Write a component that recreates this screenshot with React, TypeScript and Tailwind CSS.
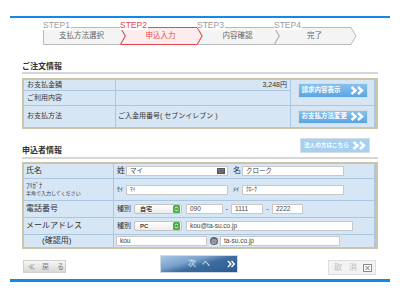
import type { ReactNode } from 'react'

const steps = [
  { label: 'STEP1', text: '支払方法選択' },
  { label: 'STEP2', text: '申込入力', active: true },
  { label: 'STEP3', text: '内容確認' },
  { label: 'STEP4', text: '完了' }
]

function Step({ label, text, active, first }: { label: string; text: string; active?: boolean; first?: boolean }) {
  const stroke = active ? '#e8474c' : '#b9b9b9'
  const fill = active ? '#fdeced' : '#f4f4f4'
  const points = first
    ? '0.5,0.5 77,0.5 82,9 77,17.5 0.5,17.5'
    : '0.5,0.5 77,0.5 82,9 77,17.5 0.5,17.5 5.5,9'
  return (
    <div className={`relative h-[18px] w-[77px] shrink-0 ${active ? 'z-10' : ''}`}>
      <svg className="absolute left-0 top-0 overflow-visible" width="83" height="18">
        <polygon points={points} fill={fill} stroke={stroke} strokeWidth="1" />
      </svg>
      <div
        className={`relative flex h-full items-center justify-center text-[7.5px] ${first ? 'w-[77px]' : 'w-[81px]'} ${active ? 'text-[#e8474c]' : 'text-[#666]'}`}
      >
        {text}
      </div>
      <span
        className={`absolute left-0 top-[-6px] bg-white pr-px text-[8.5px] leading-[8.5px] ${active ? 'text-[#e8474c]' : 'text-[#9a9a9a]'}`}
      >
        {label}
      </span>
    </div>
  )
}

function Chevrons() {
  return (
    <svg className="shrink-0" width="15" height="9" viewBox="0 0 15 9">
      <path d="M1.5 1 L5.5 4.5 L1.5 8 M8 1 L12 4.5 L8 8" fill="none" stroke="#fff" strokeWidth="2.4" />
    </svg>
  )
}

function BlueButton({ children, faded, tall }: { children: ReactNode; faded?: boolean; tall?: boolean }) {
  return (
    <div
      className={`flex w-[70px] items-center justify-between border border-[#d6dde4] pl-[3px] pr-[2px] font-bold text-white ${tall ? 'h-[15px]' : 'h-[14px]'} ${faded ? 'bg-[#a6d0f2] text-[5.6px]' : 'bg-gradient-to-b from-[#86c2ef] to-[#5ba4e1] text-[6.5px]'}`}
    >
      <span className="whitespace-nowrap leading-none">{children}</span>
      <Chevrons />
    </div>
  )
}

function Input({ w, children, small }: { w: string; children?: ReactNode; small?: boolean }) {
  return (
    <div
      className={`flex h-[10px] shrink-0 items-center border border-[#c8c8c8] bg-white pl-[3px] leading-none text-[#444] ${small ? 'text-[5.5px]' : 'text-[6.5px]'} ${w}`}
    >
      {children}
    </div>
  )
}

function Select({ value }: { value: string }) {
  return (
    <div className="flex h-[10px] w-[48px] shrink-0 items-center justify-between rounded-[2px] border border-[#c3c3c3] bg-gradient-to-b from-white to-[#ececec] pl-[5px] pr-px text-[6px] font-bold leading-none text-[#444]">
      <span>{value}</span>
      <svg width="7" height="8" viewBox="0 0 7 8">
        <rect width="7" height="8" rx="1.5" fill="#47ad45" />
        <path d="M2 3.3 L3.5 1.8 L5 3.3 M2 4.7 L3.5 6.2 L5 4.7" fill="none" stroke="#fff" strokeWidth="0.9" />
      </svg>
    </div>
  )
}

function Cell({ children, className = '' }: { children?: ReactNode; className?: string }) {
  return <div className={`flex items-center bg-[#d6e6f5] ${className}`}>{children}</div>
}

export default function App() {
  return (
    <div className="h-[300px] w-[400px] overflow-hidden bg-white pt-[16px] font-['Liberation_Sans','Noto_Sans_CJK_JP',sans-serif] text-[#333]">
      <div className="mx-[10px] h-[2px] bg-[#1289ea]" />

      <div className="mt-[9px] flex pl-[43px]">
        {steps.map((s, i) => (
          <Step key={s.label} label={s.label} text={s.text} active={s.active} first={i === 0} />
        ))}
      </div>

      {/* ご注文情報 */}
      <div className="mx-[22px] mt-[17px] border-b-2 border-[#d6d6d6] pb-px">
        <span className="block text-[8px] font-bold leading-[9px] text-[#333]">ご注文情報</span>
      </div>

      <div className="mx-[22px] mt-[4px] grid grid-cols-[91px_174px_83px] grid-rows-[10px_14px_21px] gap-px border-2 border-[#ccc4aa] bg-[#abc6e0] text-[7px]">
        <Cell className="pl-[3px]">お支払金額</Cell>
        <Cell className="justify-end pr-[3px]">3,248円</Cell>
        <div className="row-span-2 flex justify-center bg-[#d6e6f5] pt-[3px]">
          <BlueButton tall>請求内容表示</BlueButton>
        </div>
        <Cell className="pl-[3px]">ご利用内容</Cell>
        <Cell />
        <Cell className="pl-[3px]">お支払方法</Cell>
        <Cell className="pl-[2px]">ご入金用番号( セブンイレブン )</Cell>
        <Cell className="justify-center">
          <BlueButton>お支払方法変更</BlueButton>
        </Cell>
      </div>

      {/* 申込者情報 */}
      <div className="mx-[22px] mt-[9px] flex items-end justify-between border-b-2 border-[#d6d6d6]">
        <span className="block pb-[2px] text-[8px] font-bold leading-[9px] text-[#333]">申込者情報</span>
        <div className="mb-[4px] mr-[8px]">
          <BlueButton faded tall>法人の方はこちら</BlueButton>
        </div>
      </div>

      <div className="mx-[22px] mt-[3px] grid grid-cols-[89px_260px] grid-rows-[14px_21px_16px_16px_12px] gap-px border-2 border-[#ccc4aa] bg-[#abc6e0] text-[8px]">
        <Cell className="pl-[2px]">氏名</Cell>
        <Cell className="pl-[3px]">
          <span className="w-[9px] shrink-0">姓</span>
          <Input w="w-[102px] justify-between pr-[2px]">
            <span>マイ</span>
            <svg width="8" height="6" viewBox="0 0 8 6">
              <rect width="8" height="6" fill="#555" />
              <path d="M1 1.5 H7 M1 3 H7 M2 4.5 H6" stroke="#bbb" strokeWidth="0.6" strokeDasharray="0.8 0.5" />
            </svg>
          </Input>
          <span className="ml-[5px] w-[9px] shrink-0">名</span>
          <Input w="w-[102px]">クローク</Input>
        </Cell>

        <div className="flex flex-col justify-center bg-[#d6e6f5] pl-[2px] leading-none">
          <span className="text-[6.5px]">ﾌﾘｶﾞﾅ</span>
          <span className="mt-[2px] text-[5px]">半角で入力してください</span>
        </div>
        <Cell className="pl-[3px]">
          <span className="w-[9px] shrink-0 text-[6px]">ｾｲ</span>
          <Input w="w-[102px]" small>ﾏｲ</Input>
          <span className="ml-[5px] w-[9px] shrink-0 text-[6px]">ﾒｲ</span>
          <Input w="w-[102px]" small>ｸﾛｰｸ</Input>
        </Cell>

        <Cell className="pl-[2px]">電話番号</Cell>
        <Cell className="pl-[3px]">
          <span className="w-[17px] shrink-0 text-[7px]">種別</span>
          <Select value="自宅" />
          <div className="ml-[4px]">
            <Input w="w-[37px]">090</Input>
          </div>
          <span className="w-[8px] shrink-0 text-center text-[7px]">-</span>
          <Input w="w-[32px]">1111</Input>
          <span className="w-[9px] shrink-0 text-center text-[7px]">-</span>
          <Input w="w-[31px]">2222</Input>
        </Cell>

        <Cell className="pl-[2px]">メールアドレス</Cell>
        <Cell className="pl-[3px]">
          <span className="w-[17px] shrink-0 text-[7px]">種別</span>
          <Select value="PC" />
          <div className="ml-[4px]">
            <Input w="w-[167px]">kou@ta-su.co.jp</Input>
          </div>
        </Cell>

        <Cell className="pl-[18px]">(確認用)</Cell>
        <Cell className="pl-[2px]">
          <Input w="w-[91px]">kou</Input>
          <span className="ml-[3px] flex h-[8px] w-[8px] shrink-0 items-center justify-center rounded-full bg-[#666] text-[6px] leading-none text-[#ddd]">
            @
          </span>
          <div className="ml-[2px]">
            <Input w="w-[120px]">ta-su.co.jp</Input>
          </div>
        </Cell>
      </div>

      {/* buttons */}
      <div className="mt-[6px] flex items-start pl-[23px]">
        <div className="mt-[5px] flex h-[13px] w-[43px] shrink-0 items-center border border-[#cfcfcf] bg-gradient-to-b from-[#f6f6f6] to-[#d8d8d8] pl-[4px] text-[7px] leading-none text-[#7a7a7a]">
          <span>≪</span>
          <span className="ml-[7px]">戻</span>
          <span className="ml-[8px]">る</span>
        </div>
        <div className="ml-[94px] flex h-[18px] w-[78px] shrink-0 items-center border border-[#d0d9e2] bg-[linear-gradient(165deg,#a9c7e4_0%,#7aa2cc_35%,#3d6c9f_55%,#2c5a8c_100%)] pl-[27px] text-[8px] leading-none text-[#e8eef5]">
          <span>次</span>
          <span className="ml-[6px]">へ</span>
          <svg className="ml-[17px]" width="8" height="8" viewBox="0 0 8 8">
            <path d="M1 1 L3.8 4 L1 7 M4.5 1 L7.3 4 L4.5 7" fill="none" stroke="#fff" strokeWidth="1.4" />
          </svg>
        </div>
        <div className="ml-[90px] mt-[5px] flex h-[15px] w-[48px] shrink-0 items-center border border-[#dedede] bg-[#f3f3f3] pl-[5px] text-[8px] leading-none text-[#bdbdbd]">
          <span>取</span>
          <span className="ml-[7px]">消</span>
          <svg className="ml-[6px]" width="9" height="8" viewBox="0 0 9 8">
            <rect x="0.5" y="0.5" width="8" height="7" fill="#fafafa" stroke="#8a8a8a" />
            <path d="M2.5 2 L6.5 6 M6.5 2 L2.5 6" stroke="#777" strokeWidth="1" />
          </svg>
        </div>
      </div>

      <div className="mx-[10px] mt-[4px] h-[3px] bg-[#1289ea]" />
    </div>
  )
}
